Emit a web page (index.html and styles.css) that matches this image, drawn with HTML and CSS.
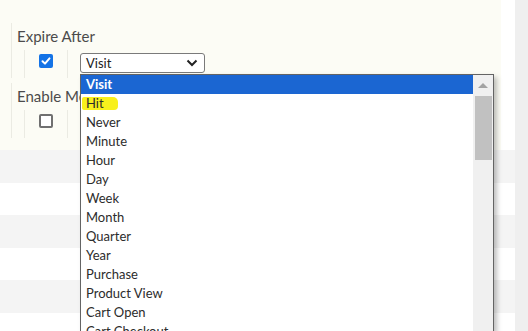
FILE: index.html
```html
<!DOCTYPE html>
<html>
	<head>
		<meta charset="utf-8" />
		<link rel="stylesheet" href="styles.css">
		<title>expire after</title>
	</head>
	<body>
		<div class="page">
			<div class="main">
				<div class="panel">
					<div class="field">
						<div class="label">Expire After</div>
						<div class="controls">
							<div class="cell cell-check"><span class="check on"><svg width="14" height="14" viewBox="0 0 14 14"><polyline points="3.5,7.2 6,9.6 10.5,4.4" fill="none" stroke="#fff" stroke-width="2" stroke-linecap="round" stroke-linejoin="round"/></svg></span></div>
							<div class="cell cell-select">
								<div class="select">
									<span>Visit</span>
									<svg width="12" height="8" viewBox="0 0 12 8"><polyline points="1.5,1.5 6,6 10.5,1.5" fill="none" stroke="#222" stroke-width="2"/></svg>
								</div>
							</div>
						</div>
					</div>
					<div class="field">
						<div class="label">Enable Merchandising</div>
						<div class="controls">
							<div class="cell cell-check"><span class="check"></span></div>
							<div class="cell cell-select"></div>
						</div>
					</div>
				</div>
				<div class="rows">
					<div class="row"></div>
					<div class="row"></div>
					<div class="row"></div>
					<div class="row"></div>
					<div class="row"></div>
					<div class="row"></div>
				</div>
			</div>
			<div class="side"></div>
		</div>

		<!-- open list of the select -->
		<div class="list">
			<ul>
				<li class="selected">Visit</li>
				<li><span class="mark">Hit</span></li>
				<li>Never</li>
				<li>Minute</li>
				<li>Hour</li>
				<li>Day</li>
				<li>Week</li>
				<li>Month</li>
				<li>Quarter</li>
				<li>Year</li>
				<li>Purchase</li>
				<li>Product View</li>
				<li>Cart Open</li>
				<li>Cart Checkout</li>
			</ul>
			<div class="scroll">
				<div class="arrow"></div>
				<div class="thumb"></div>
			</div>
		</div>
	</body>
</html>
```

FILE: styles.css
```css
body,html{
	margin:0;
	padding:0;
	background-color:#fff;
	font-family:Lato, "Open Sans", sans-serif;
	overflow:hidden;
}
ul,li{
	margin:0;
	padding:0;
	list-style:none;
}
.page{
	display:flex;
	height:331px;
}
.main{
	width:515px;
}
.side{
	flex:1;
	background-color:#efefef;
}
.panel{
	width:501px;
	height:150px;
	background-color:#fcfcf5;
	padding-top:23px;
	box-sizing:border-box;
}
.field{
	margin-left:11px;
	border-left:1px solid #ebebe3;
	height:55px;
	margin-bottom:5px;
}
.label{
	height:27px;
	line-height:27px;
	padding-left:5px;
	font-size:15px;
	color:#4b4b4b;
	white-space:nowrap;
}
.controls{
	display:flex;
	height:28px;
	padding-left:12px;
}
.cell{
	border-left:1px solid #ebebe3;
}
.cell-check{
	width:42px;
	display:flex;
	justify-content:center;
	padding-top:4px;
}
.cell-select{
	padding:3px 0 0 12px;
}
.check{
	display:block;
	width:14px;
	height:14px;
	box-sizing:border-box;
	border:2px solid #707070;
	border-radius:2px;
	background-color:#fff;
}
.check.on{
	border:none;
	background-color:#1473e6;
}
.check svg{
	display:block;
}
.select{
	width:125px;
	height:20px;
	box-sizing:border-box;
	border:1px solid #7a7a7a;
	border-radius:3px;
	background-color:#fff;
	display:flex;
	align-items:center;
	justify-content:space-between;
	padding:0 6px 0 5px;
	font-size:13px;
	color:#222;
}
.rows .row{
	height:32.5px;
}
.rows .row:nth-child(odd){
	background-color:#f4f4f4;
}
.list{
	position:absolute;
	left:80px;
	top:74px;
	width:414px;
	height:257px;
	box-sizing:border-box;
	border:1px solid #646464;
	border-bottom:none;
	background-color:#fff;
	box-shadow:3px 3px 5px rgba(0,0,0,0.25);
	overflow:hidden;
}
.list ul{
	margin-right:20px;
}
.list li{
	height:19px;
	line-height:19px;
	padding-left:5px;
	font-size:13px;
	color:#2c2c2c;
	white-space:nowrap;
}
.list li.selected{
	background-color:#1b66d2;
	color:#fff;
	font-weight:bold;
}
.mark{
	display:inline-block;
	line-height:13px;
	margin-left:-4px;
	padding:0 14px 0 4px;
	background-color:#f8f01c;
	border-radius:2px 5px 4px 2px;
}
.scroll{
	position:absolute;
	right:0;
	top:0;
	bottom:0;
	width:20px;
	background-color:#f0f0f0;
}
.arrow{
	width:0;
	height:0;
	margin:8px auto 0;
	border-left:5px solid transparent;
	border-right:5px solid transparent;
	border-bottom:5px solid #a3a3a3;
}
.thumb{
	margin:8px 1px 0 2px;
	height:64px;
	background-color:#c1c1c1;
}
```
